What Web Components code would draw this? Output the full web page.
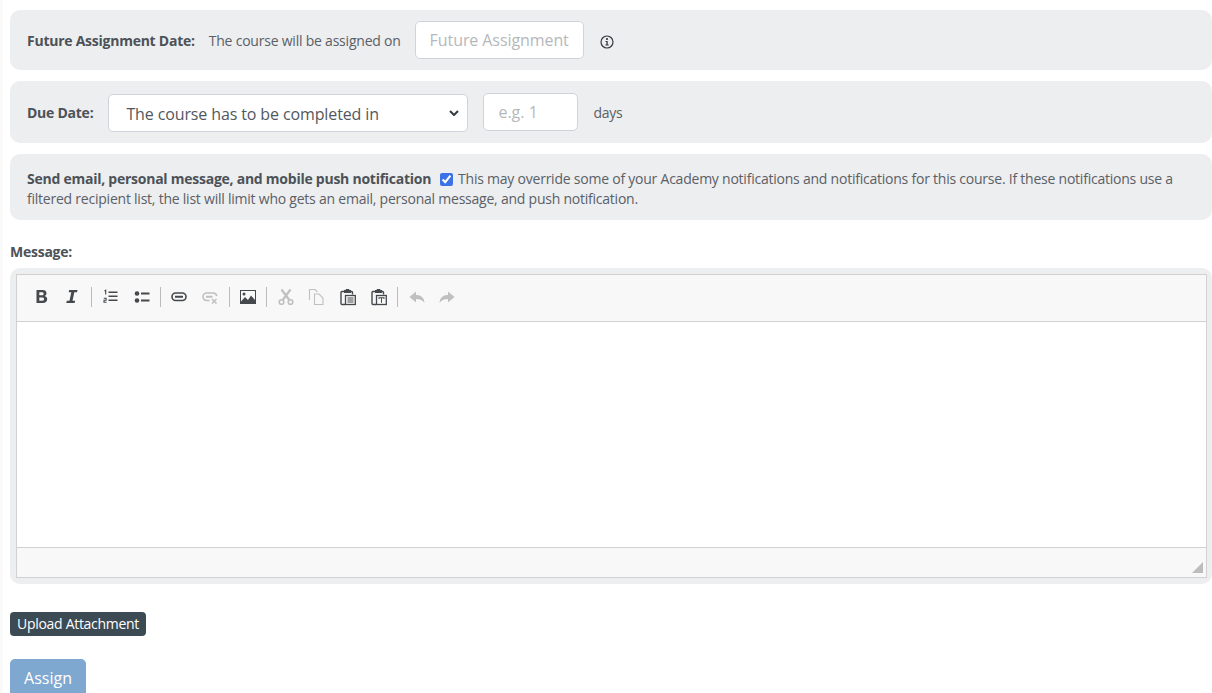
<!DOCTYPE html>
<html lang="en">
<head>
<meta charset="utf-8">
<title>Assign course</title>
<style>
  html, body { margin: 0; height: 100%; overflow: hidden; }
  body {
    background: linear-gradient(90deg, #fafafa 3px, #fff 3px);
    font: 14px/20px "Open Sans", sans-serif;
    letter-spacing: -.25px;
    color: #5a6066;
  }
</style>
</head>
<body>

<assign-form>
  <form-panel style="--panel-h:60px;--panel-gap:0px">
    <b style="padding-top:2px">Future Assignment Date:</b>
    <span style="margin-left:14px;padding-top:2px;letter-spacing:-.22px">The course will be assigned on</span>
    <text-box placeholder="Future Assignment" style="width:169px;margin-left:14px;--ph-spacing:-.08px"></text-box>
    <info-icon style="margin:4px 0 0 16px"></info-icon>
  </form-panel>

  <form-panel style="--panel-h:62px;--panel-gap:11px">
    <b style="padding-top:2px">Due Date:</b>
    <select-box style="margin:2px 0 0 15px">The course has to be completed in</select-box>
    <text-box placeholder="e.g. 1" style="width:95px;margin-left:15px"></text-box>
    <span style="margin-left:15px;padding-top:2px">days</span>
  </form-panel>

  <notify-panel>
    <b slot="label">Send email, personal message, and mobile push notification</b>
    <span>This may override some of your Academy notifications and notifications for this course. If these notifications use a</span><br>
    <span>filtered recipient list, the list will limit who gets an email, personal message, and push notification.</span>
  </notify-panel>

  <rich-editor label="Message:"></rich-editor>

  <action-buttons></action-buttons>
</assign-form>

<script>
/* Page wrapper */
class AssignForm extends HTMLElement {
  constructor() {
    super();
    this.attachShadow({ mode: 'open' }).innerHTML = `
      <style>
        :host { display: flex; flex-direction: column; padding: 10px 0 0 10px; }
      </style>
      <slot></slot>`;
  }
}

/* Grey rounded row */
class FormPanel extends HTMLElement {
  constructor() {
    super();
    this.attachShadow({ mode: 'open' }).innerHTML = `
      <style>
        :host {
          display: flex;
          align-items: center;
          box-sizing: border-box;
          height: var(--panel-h);
          margin-top: var(--panel-gap);
          padding: 0 17px;
          background: #edeef0;
          border-radius: 10px;
        }
        ::slotted(b) { font-weight: 700; color: #4c5257; }
      </style>
      <slot></slot>`;
  }
}

class TextBox extends HTMLElement {
  constructor() {
    super();
    const ph = this.getAttribute('placeholder') ?? '';
    this.attachShadow({ mode: 'open' }).innerHTML = `
      <style>
        :host { display: block; }
        input {
          display: block;
          box-sizing: border-box;
          width: 100%;
          height: 38px;
          padding: 0 8px 0 14px;
          font: 16px "Open Sans", sans-serif;
          letter-spacing: var(--ph-spacing, 0);
          background: #fff;
          border: 1px solid #ced4da;
          border-radius: 5px;
          outline: none;
        }
        input::placeholder { color: #b5b8bb; opacity: 1; }
      </style>
      <input type="text" placeholder="${ph}">`;
  }
}

class SelectBox extends HTMLElement {
  constructor() {
    super();
    this.attachShadow({ mode: 'open' }).innerHTML = `
      <style>
        :host {
          display: flex;
          align-items: center;
          justify-content: space-between;
          box-sizing: border-box;
          width: 360px;
          height: 38px;
          padding: 2px 8px 0 17px;
          font-size: 16px;
          letter-spacing: -.12px;
          color: #52585e;
          background: #fff;
          border: 1px solid #ced4da;
          border-radius: 5px;
        }
        svg { display: block; margin-top: -2px; }
      </style>
      <slot></slot>
      <svg width="10" height="6" viewBox="0 0 10 6"><path d="M1 1l4 4 4-4" fill="none" stroke="#343a40" stroke-width="2"/></svg>`;
  }
}

class InfoIcon extends HTMLElement {
  constructor() {
    super();
    this.attachShadow({ mode: 'open' }).innerHTML = `
      <style>:host { display: block; width: 14px; height: 14px; } svg { display: block; }</style>
      <svg width="14" height="14" viewBox="0 0 14 14">
        <circle cx="7" cy="7" r="6" fill="none" stroke="#33383d" stroke-width="1.2"/>
        <circle cx="7" cy="4" r="1.1" fill="#33383d"/>
        <path d="M5.6 6h2.1v3.6h1v1H5.4v-1h1V7H5.6z" fill="#33383d"/>
      </svg>`;
  }
}

class NotifyPanel extends HTMLElement {
  constructor() {
    super();
    this.attachShadow({ mode: 'open' }).innerHTML = `
      <style>
        :host {
          display: block;
          box-sizing: border-box;
          height: 66px;
          margin-top: 11px;
          padding: 15px 17px 0;
          letter-spacing: -.23px;
          background: #edeef0;
          border-radius: 10px;
        }
        ::slotted(b) { font-weight: 700; color: #4c5257; letter-spacing: -.25px; }
        input {
          width: 13px; height: 13px;
          margin: 0 2px 0 5px;
          vertical-align: -2px;
          accent-color: #3b72e8;
        }
      </style>
      <slot name="label"></slot>
      <input type="checkbox" checked>
      <slot></slot>`;
  }
}

/* Toolbar icons, 16x16 box */
const ICONS = {
  bold: `<path d="M2.500 1h6c2.600 0 4 1.200 4 3.300 0 1.300-.7 2.300-1.900 2.800 1.600.4 2.600 1.600 2.600 3.200 0 2.400-1.700 3.700-4.600 3.700H2.500zm2.800 2.200v3.100h2.600c1.100 0 1.700-.6 1.700-1.600s-.6-1.500-1.700-1.500zm0 5.200v3.400h3c1.100 0 1.800-.6 1.800-1.700s-.7-1.700-1.800-1.700z" fill="currentColor"/>`,
  italic: `<path d="M5.200 1h8.300l-.5 2.200h-2.700L8.500 11.800h2.600l-.5 2.200H2.300l.5-2.200h2.700l1.800-8.600H4.700z" fill="currentColor"/>`,
  ol: `<path d="M6.500 2.500h9V4h-9zm0 4h9V8h-9zm0 4h9V12h-9z" fill="currentColor"/><path d="M2.500 2l1.200-.7v4.200" fill="none" stroke="currentColor" stroke-width="1.100"/><path d="M1.800 9.200h2.300v2H2v2h2.500" fill="none" stroke="currentColor" stroke-width="1.100"/>`,
  ul: `<circle cx="3" cy="4.500" r="2.300" fill="currentColor"/><circle cx="3" cy="11.500" r="2.300" fill="currentColor"/><path d="M7 3.500h8.500v2H7zm0 7h8.500v2H7z" fill="currentColor"/>`,
  link: `<rect x="1" y="4" width="14" height="7.500" rx="3.700" fill="none" stroke="currentColor" stroke-width="1.600"/><path d="M4 7.750h8" stroke="currentColor" stroke-width="2"/>`,
  unlink: `<path d="M7.500 11.500H4.700A3.700 3.700 0 0 1 4.700 4h6.600a3.700 3.700 0 0 1 3.500 3" fill="none" stroke="currentColor" stroke-width="1.600"/><path d="M4 7.750h6.500" stroke="currentColor" stroke-width="2"/><path d="M10 10l4.500 4.500m0-4.500L10 14.500" stroke="currentColor" stroke-width="1.600"/>`,
  image: `<rect x=".5" y="1.500" width="15" height="13" fill="none" stroke="currentColor"/><path d="M1 14v-1.500l4-4.500 3 3 3-4.500 4 4.500V14z" fill="currentColor"/><circle cx="4" cy="5" r="1.500" fill="currentColor"/>`,
  cut: `<circle cx="3.500" cy="13" r="2.300" fill="none" stroke="currentColor" stroke-width="1.600"/><circle cx="12.500" cy="13" r="2.300" fill="none" stroke="currentColor" stroke-width="1.600"/><path d="M4.700 11L12.500 .5M11.300 11L3.500 .5" stroke="currentColor" stroke-width="2.200" fill="none"/>`,
  copy: `<path d="M1.500 11V.5h5.500l2.500 2.500M6.500 5h4.500l4 4v6.500h-8.500z" fill="none" stroke="currentColor" stroke-width="1.100"/>`,
  paste: `<path d="M4 2.500H2a1 1 0 0 0-1 1V14.500a1 1 0 0 0 1 1H5" fill="none" stroke="currentColor" stroke-width="1.400"/><path d="M12.500 5.500V3.500a1 1 0 0 0-1-1H10" fill="none" stroke="currentColor" stroke-width="1.400"/><path d="M4 1h1.500l.5-1h3l.5 1H11v3H4z" fill="currentColor"/><rect x="5.500" y="6.500" width="9.800" height="9" fill="none" stroke="currentColor" stroke-width="1.300"/><path d="M7.500 8.500h6v1h-6zm0 2h6v1h-6zm0 2h6v1h-6z" fill="currentColor"/>`,
  pastetext: `<path d="M4 2.500H2a1 1 0 0 0-1 1V14.500a1 1 0 0 0 1 1H5" fill="none" stroke="currentColor" stroke-width="1.400"/><path d="M12.500 5.500V3.500a1 1 0 0 0-1-1H10" fill="none" stroke="currentColor" stroke-width="1.400"/><path d="M4 1h1.500l.5-1h3l.5 1H11v3H4z" fill="currentColor"/><rect x="5.500" y="6.500" width="9.800" height="9" fill="none" stroke="currentColor" stroke-width="1.300"/><path d="M7.500 8.300h6v1.800h-1V9.300h-1.500v4.400h-1V9.300H8.500v.8h-1z" fill="currentColor"/>`,
  undo: `<path d="M7 2.500L.5 8 7 13.500V10c3.500 0 6 1 8.500 3.800C15 8.500 12 6 7 6z" fill="currentColor"/>`,
  redo: `<path d="M9 2.500L15.500 8 9 13.500V10c-3.500 0-6 1-8.500 3.800C1 8.500 4 6 9 6z" fill="currentColor"/>`
};

class ToolIcon extends HTMLElement {
  constructor() {
    super();
    const name = this.getAttribute('name');
    this.attachShadow({ mode: 'open' }).innerHTML = `
      <style>
        :host { display: block; flex: none; width: 16px; height: 16px; color: #45494d; }
        :host([off]) { color: #bfc0c1; }
        svg { display: block; overflow: visible; }
      </style>
      <svg width="16" height="16" viewBox="0 0 16 16">${ICONS[name]}</svg>`;
  }
}

class RichEditor extends HTMLElement {
  constructor() {
    super();
    /* [icon, left margin, greyed out] */
    const tools = [
      ['bold', 17, 0], ['italic', 14, 0], ['|', 11],
      ['ol', 10, 0], ['ul', 16, 0], ['|', 10],
      ['link', 10, 0], ['unlink', 15, 1], ['|', 11],
      ['image', 10, 0], ['|', 10],
      ['cut', 11, 1], ['copy', 14, 1], ['paste', 16, 0], ['pastetext', 15, 0], ['|', 10],
      ['undo', 11, 1], ['redo', 14, 1]
    ];
    const bar = tools.map(([n, gap, off]) => n === '|'
      ? `<i class="sep" style="margin-left:${gap}px"></i>`
      : `<tool-icon name="${n}" ${off ? 'off' : ''} style="margin-left:${gap}px"></tool-icon>`).join('');
    this.attachShadow({ mode: 'open' }).innerHTML = `
      <style>
        :host { display: block; margin-top: 21px; }
        .label { font-weight: 700; color: #4c5257; height: 27px; line-height: 22px; }
        .frame {
          box-sizing: border-box;
          height: 316px;
          padding: 6px 5px 6px 6px;
          background: #edeef0;
          border-radius: 10px;
        }
        .inner {
          box-sizing: border-box;
          height: 304px;
          display: flex;
          flex-direction: column;
          border: 1px solid #d1d1d1;
          background: #f8f8f8;
        }
        .bar {
          flex: none;
          display: flex;
          align-items: center;
          height: 47px;
          padding-bottom: 2px;
          border-bottom: 1px solid #d1d1d1;
          box-sizing: border-box;
        }
        .sep { display: block; flex: none; width: 1px; height: 20px; background: #bcbcbc; }
        .content { flex: 1; background: #fff; }
        .foot {
          flex: none;
          position: relative;
          height: 30px;
          box-sizing: border-box;
          border-top: 1px solid #d1d1d1;
        }
        .grip {
          position: absolute; right: 3px; bottom: 4px;
          width: 0; height: 0;
          border-style: solid;
          border-width: 0 0 11px 11px;
          border-color: transparent transparent #bdbdbd transparent;
        }
      </style>
      <div class="label">${this.getAttribute('label')}</div>
      <div class="frame">
        <div class="inner">
          <div class="bar">${bar}</div>
          <div class="content"></div>
          <div class="foot"><span class="grip"></span></div>
        </div>
      </div>`;
  }
}

class ActionButtons extends HTMLElement {
  constructor() {
    super();
    this.attachShadow({ mode: 'open' }).innerHTML = `
      <style>
        :host { display: flex; flex-direction: column; align-items: flex-start; margin-top: 28px; }
        button { display: block; border: 0; font-family: "Open Sans", sans-serif; color: #fff; padding: 0; }
        .upload {
          width: 136px; height: 24px;
          padding-bottom: 2px;
          font-size: 14px;
          letter-spacing: -.3px;
          background: #3c4a54;
          border-radius: 4px;
        }
        .assign {
          width: 76px; height: 38px;
          margin-top: 23px;
          font-size: 16px;
          background: #7fa8d1;
          border-radius: 5px;
        }
      </style>
      <button class="upload">Upload Attachment</button>
      <button class="assign">Assign</button>`;
  }
}

customElements.define('assign-form', AssignForm);
customElements.define('form-panel', FormPanel);
customElements.define('text-box', TextBox);
customElements.define('select-box', SelectBox);
customElements.define('info-icon', InfoIcon);
customElements.define('notify-panel', NotifyPanel);
customElements.define('tool-icon', ToolIcon);
customElements.define('rich-editor', RichEditor);
customElements.define('action-buttons', ActionButtons);
</script>
</body>
</html>
